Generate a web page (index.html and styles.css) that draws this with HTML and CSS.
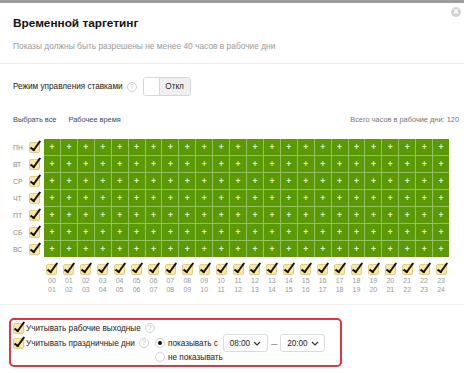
FILE: index.html
```html
<!DOCTYPE html>
<html lang="ru">
<head>
  <meta charset="UTF-8">
  <meta name="viewport" content="width=device-width, initial-scale=1.0">
  <title>Временной таргетинг</title>
  <link rel="stylesheet" href="styles.css">
</head>
<body>
  <div class="modal">
    <div class="header">
      <h1>Временной таргетинг</h1>
      <p class="hint">Показы должны быть разрешены не менее 40 часов в рабочие дни</p>
      <span class="close">&times;</span>
    </div>

    <div class="content">
      <div class="mode">
        <span>Режим управления ставками</span>
        <span class="help">?</span>
        <span class="toggle"><span class="knob"></span><span class="state">Откл</span></span>
      </div>

      <div class="links">
        <a href="#">Выбрать все</a>
        <a href="#">Рабочее время</a>
        <span class="total">Всего часов в рабочие дни: 120</span>
      </div>

      <div class="schedule">
        <div class="days" id="days"></div>
        <div class="board" id="board"></div>
      </div>
      <div class="hours" id="hours"></div>
    </div>

    <div class="options">
      <div class="option-row">
        <span class="cb"></span>
        <span class="label">Учитывать рабочие выходные</span>
        <span class="help">?</span>
      </div>
      <div class="option-row holidays">
        <div class="holiday-label">
          <span class="cb"></span>
          <span class="label">Учитывать праздничные дни</span>
          <span class="help">?</span>
        </div>
        <div class="radios">
          <div class="radio-line">
            <span class="radio checked"></span>
            <span>показывать с</span>
            <span class="select first">08:00 <svg width="8" height="5" viewBox="0 0 8 5"><path d="M1 1l3 3 3-3" fill="none" stroke="#333" stroke-width="1.2"/></svg></span>
            <span class="dash">—</span>
            <span class="select">20:00 <svg width="8" height="5" viewBox="0 0 8 5"><path d="M1 1l3 3 3-3" fill="none" stroke="#333" stroke-width="1.2"/></svg></span>
          </div>
          <div class="radio-line second">
            <span class="radio"></span>
            <span>не показывать</span>
          </div>
        </div>
      </div>
    </div>
  </div>

  <script>
    // Days of week with checkboxes
    const days = ['ПН', 'ВТ', 'СР', 'ЧТ', 'ПТ', 'СБ', 'ВС'];
    const daysBox = document.getElementById('days');
    const board = document.getElementById('board');
    const hours = document.getElementById('hours');

    days.forEach((d) => {
      daysBox.insertAdjacentHTML('beforeend',
        `<div class="day"><span class="day-name">${d}</span><span class="cb"></span></div>`);
      for (let h = 0; h < 24; h++) {
        board.insertAdjacentHTML('beforeend', '<span class="cell">+</span>');
      }
    });

    // Hour columns
    const pad = (n) => String(n).padStart(2, '0');
    for (let h = 0; h < 24; h++) {
      hours.insertAdjacentHTML('beforeend',
        `<div class="hour"><span class="cb"></span><span class="num">${pad(h)}</span><span class="num">${pad(h + 1)}</span></div>`);
    }
  </script>
</body>
</html>
```

FILE: styles.css
```css
/* General */
body {
  margin: 0;
  background-color: #fff;
  font-family: 'Liberation Sans', Arial, sans-serif;
  color: #222;
}

.modal {
  width: 464px;
  border-top: 3px solid #9d9d9d;
}

/* Header */
.header {
  position: relative;
  padding: 12px 13px 10px;
  border-bottom: 1px solid #eee;
}

h1 {
  margin: 0;
  font-size: 11.8px;
  line-height: 16px;
  font-weight: bold;
  color: #111;
}

.hint {
  margin: 8px 0 0;
  font-size: 8.4px;
  line-height: 14px;
  color: #9a9a9a;
}

.close {
  position: absolute;
  top: 4px;
  right: 3px;
  width: 10px;
  height: 10px;
  border-radius: 50%;
  background-color: #d2d2d2;
  color: #fff;
  font-size: 10px;
  line-height: 10px;
  text-align: center;
  font-weight: bold;
}

/* Content */
.content {
  padding: 13px 0 10px 13px;
  border-bottom: 1px solid #f0f0f0;
}

.mode {
  display: flex;
  align-items: center;
  height: 19px;
  font-size: 8.2px;
}

.help {
  display: inline-block;
  width: 8px;
  height: 8px;
  margin-left: 4px;
  border: 1px solid #cfcfcf;
  border-radius: 50%;
  color: #bbb;
  font-size: 7px;
  line-height: 8px;
  text-align: center;
}

.toggle {
  display: flex;
  height: 17px;
  margin-left: 6px;
  border: 1px solid #d6d6d6;
  border-radius: 3px;
  overflow: hidden;
}

.knob {
  width: 15px;
  background-color: #fff;
  border-right: 1px solid #d6d6d6;
}

.state {
  width: 30px;
  background-color: #efefef;
  text-align: center;
  line-height: 17px;
  font-size: 8.2px;
}

.links {
  display: flex;
  align-items: center;
  width: 446px;
  margin-top: 17px;
  font-size: 7.4px;
  line-height: 13px;
}

.links a {
  color: #3a4a66;
  text-decoration: none;
  margin-right: 12px;
}

.total {
  margin-left: auto;
  color: #777;
  font-size: 7.4px;
}

/* Schedule grid */
.schedule {
  display: flex;
  margin-top: 13px;
}

.days {
  display: flex;
  flex-direction: column;
  gap: 1px;
  width: 31px;
}

.day {
  display: flex;
  align-items: center;
  height: 16px;
}

.day-name {
  width: 16px;
  font-size: 6.8px;
  color: #888;
}

.board {
  display: grid;
  grid-template-columns: repeat(24, 1fr);
  grid-auto-rows: 16px;
  gap: 1px;
  width: 405px;
  background-color: #93c25f;
}

.cell {
  background-color: #5b9a06;
  color: #e3f1c8;
  font-size: 8.5px;
  font-weight: bold;
  line-height: 16px;
  text-align: center;
}

.hours {
  display: grid;
  grid-template-columns: repeat(24, 1fr);
  gap: 1px;
  width: 405px;
  margin: 7px 0 0 31px;
}

.hour {
  display: flex;
  flex-direction: column;
  align-items: center;
}

.hour .cb {
  margin-bottom: 1px;
}

.num {
  font-size: 7px;
  line-height: 9px;
  color: #999;
}

/* Checkbox */
.cb {
  position: relative;
  display: inline-block;
  flex: none;
  width: 9px;
  height: 9px;
  background-color: #fbe6a2;
  border: 1px solid #e3cd85;
  border-radius: 2px;
}

.cb::after {
  content: "";
  position: absolute;
  left: 3px;
  top: -4px;
  width: 3px;
  height: 10px;
  border-right: 2px solid #111;
  border-bottom: 2px solid #111;
  transform: rotate(36deg);
}

/* Options box */
.options {
  width: 327px;
  margin: 13px 0 0 9px;
  padding: 2px 0 3px 2px;
  border: 2px solid #e2343c;
  border-radius: 5px;
  font-size: 8.2px;
}

.option-row {
  display: flex;
  align-items: center;
  height: 12px;
}

.option-row .label {
  margin-left: 2px;
}

.holidays {
  align-items: flex-start;
  height: auto;
}

.holiday-label {
  display: flex;
  align-items: center;
  width: 142px;
  height: 18px;
}

.radios {
  display: flex;
  flex-direction: column;
}

.radio-line {
  display: flex;
  align-items: center;
  height: 18px;
  white-space: nowrap;
}

.radio-line.second {
  height: 10px;
}

.radio {
  position: relative;
  width: 8px;
  height: 8px;
  margin-right: 3px;
  border: 1px solid #d4d4d4;
  border-radius: 50%;
}

.radio.checked::after {
  content: "";
  position: absolute;
  left: 2px;
  top: 2px;
  width: 4px;
  height: 4px;
  border-radius: 50%;
  background-color: #111;
}

.select {
  display: flex;
  align-items: center;
  justify-content: center;
  gap: 3px;
  width: 43px;
  height: 16px;
  border: 1px solid #dcdcdc;
  border-radius: 3px;
}

.select.first {
  margin-left: 5px;
}

.dash {
  margin: 0 3px;
  font-size: 6.5px;
  color: #555;
}
```
